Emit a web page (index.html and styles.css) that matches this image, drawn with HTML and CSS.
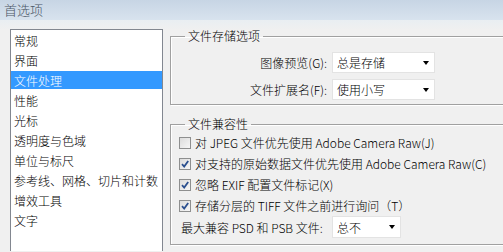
FILE: index.html
```html
<!DOCTYPE html>
<html lang="zh-CN">
<head>
<meta charset="utf-8">
<title>首选项</title>
<link rel="stylesheet" href="styles.css">
</head>
<body>
<div class="titlebar">首选项</div>
<div class="main">
  <ul class="list">
    <li>常规</li>
    <li>界面</li>
    <li class="selected">文件处理</li>
    <li>性能</li>
    <li>光标</li>
    <li>透明度与色域</li>
    <li>单位与标尺</li>
    <li>参考线、网格、切片和计数</li>
    <li>增效工具</li>
    <li>文字</li>
  </ul>
  <div class="panel">
    <fieldset class="group group-storage">
      <legend>文件存储选项</legend>
      <div class="form-grid">
        <span class="label">图像预览(G):</span>
        <div class="select"><span>总是存储</span><i class="arrow"></i></div>
        <span class="label">文件扩展名(F):</span>
        <div class="select"><span>使用小写</span><i class="arrow"></i></div>
      </div>
    </fieldset>
    <fieldset class="group group-compat">
      <legend>文件兼容性</legend>
      <div class="check-row"><span class="box"></span><span>对 JPEG 文件优先使用 Adobe Camera Raw(J)</span></div>
      <div class="check-row"><span class="box checked"><svg viewBox="0 0 10 10" width="10" height="10"><path d="M2 5.2 L4.2 7.6 L8.2 2" fill="none" stroke="#2a4f8f" stroke-width="1.8"/></svg></span><span>对支持的原始数据文件优先使用 Adobe Camera Raw(C)</span></div>
      <div class="check-row"><span class="box checked"><svg viewBox="0 0 10 10" width="10" height="10"><path d="M2 5.2 L4.2 7.6 L8.2 2" fill="none" stroke="#2a4f8f" stroke-width="1.8"/></svg></span><span>忽略 EXIF 配置文件标记(X)</span></div>
      <div class="check-row"><span class="box checked"><svg viewBox="0 0 10 10" width="10" height="10"><path d="M2 5.2 L4.2 7.6 L8.2 2" fill="none" stroke="#2a4f8f" stroke-width="1.8"/></svg></span><span>存储分层的 TIFF 文件之前进行询问（T）</span></div>
      <div class="compat-row">
        <span class="compat-label">最大兼容 PSD 和 PSB 文件:</span>
        <div class="select select-small"><span>总不</span><i class="arrow"></i></div>
      </div>
    </fieldset>
  </div>
</div>
</body>
</html>
```
FILE: styles.css
```css
html, body {
  margin: 0;
  padding: 0;
}
body {
  width: 503px;
  height: 252px;
  overflow: hidden;
  background: #f0f0f0;
  font-family: "Noto Sans CJK SC", "Noto Sans", sans-serif;
  font-size: 12px;
  font-weight: 300;
  color: #000;
}
.titlebar {
  height: 20px;
  line-height: 19px;
  padding-left: 4px;
  font-size: 13px;
  color: #4a5665;
  background: linear-gradient(#c7d5e4, #d8e3ee);
}
.main {
  display: flex;
  height: 232px;
  background: linear-gradient(#e9eef2, #f0f0f0 10px);
}
.list {
  list-style: none;
  margin: 9px 0 0 10px;
  padding: 1px 0 0;
  width: 153px;
  height: 222px;
  box-sizing: border-box;
  flex: none;
  overflow: hidden;
  background: #fff;
  border: 1px solid #828790;
  border-bottom: none;
}
.list li {
  height: 20px;
  line-height: 20px;
  padding-left: 3px;
  white-space: nowrap;
}
.list li.selected {
  color: #fff;
  background: linear-gradient(#3399ff, #3399ff) 0 0 / 100% 18px no-repeat;
  line-height: 19px;
}
.panel {
  flex: 1;
  margin-left: 7px;
  margin-right: -12px;
  padding-top: 8px;
}
.group {
  margin: 0;
  padding: 0 0 0 8px;
  border: 1px solid #a0a0a0;
  box-shadow: inset 1px 1px 0 #fff, 1px 1px 0 #fff;
}
.group legend {
  margin-left: 6px;
  padding: 0 3px;
  line-height: 16px;
}
.group-storage {
  padding-top: 8px;
  padding-bottom: 4px;
}
.form-grid {
  display: grid;
  grid-template-columns: 148px 103px;
  column-gap: 5px;
  row-gap: 6px;
  align-items: center;
}
.label {
  text-align: right;
  white-space: nowrap;
}
.select {
  height: 21px;
  box-sizing: border-box;
  background: #fff;
  border: 1px solid #e3e3e3;
  display: flex;
  align-items: center;
  justify-content: space-between;
  padding: 0 5px 0 4px;
}
.arrow {
  width: 0;
  height: 0;
  border-left: 3.5px solid transparent;
  border-right: 3.5px solid transparent;
  border-top: 4px solid #000;
}
.group-compat {
  margin-top: 11px;
  padding-bottom: 6px;
}
.check-row {
  height: 21px;
  display: flex;
  align-items: center;
  gap: 4px;
  white-space: nowrap;
}
.box {
  width: 12px;
  height: 12px;
  box-sizing: border-box;
  border: 1px solid #8e8f8f;
  background: linear-gradient(135deg, #dcdcdc, #f6f6f6);
  display: flex;
  align-items: center;
  justify-content: center;
  flex: none;
}
.box svg {
  display: block;
}
.compat-row {
  display: flex;
  align-items: center;
  height: 22px;
  padding-left: 2px;
}
.compat-label {
  width: 146px;
  white-space: nowrap;
}
.select-small {
  margin-left: 5px;
  width: 69px;
  height: 22px;
}
```
